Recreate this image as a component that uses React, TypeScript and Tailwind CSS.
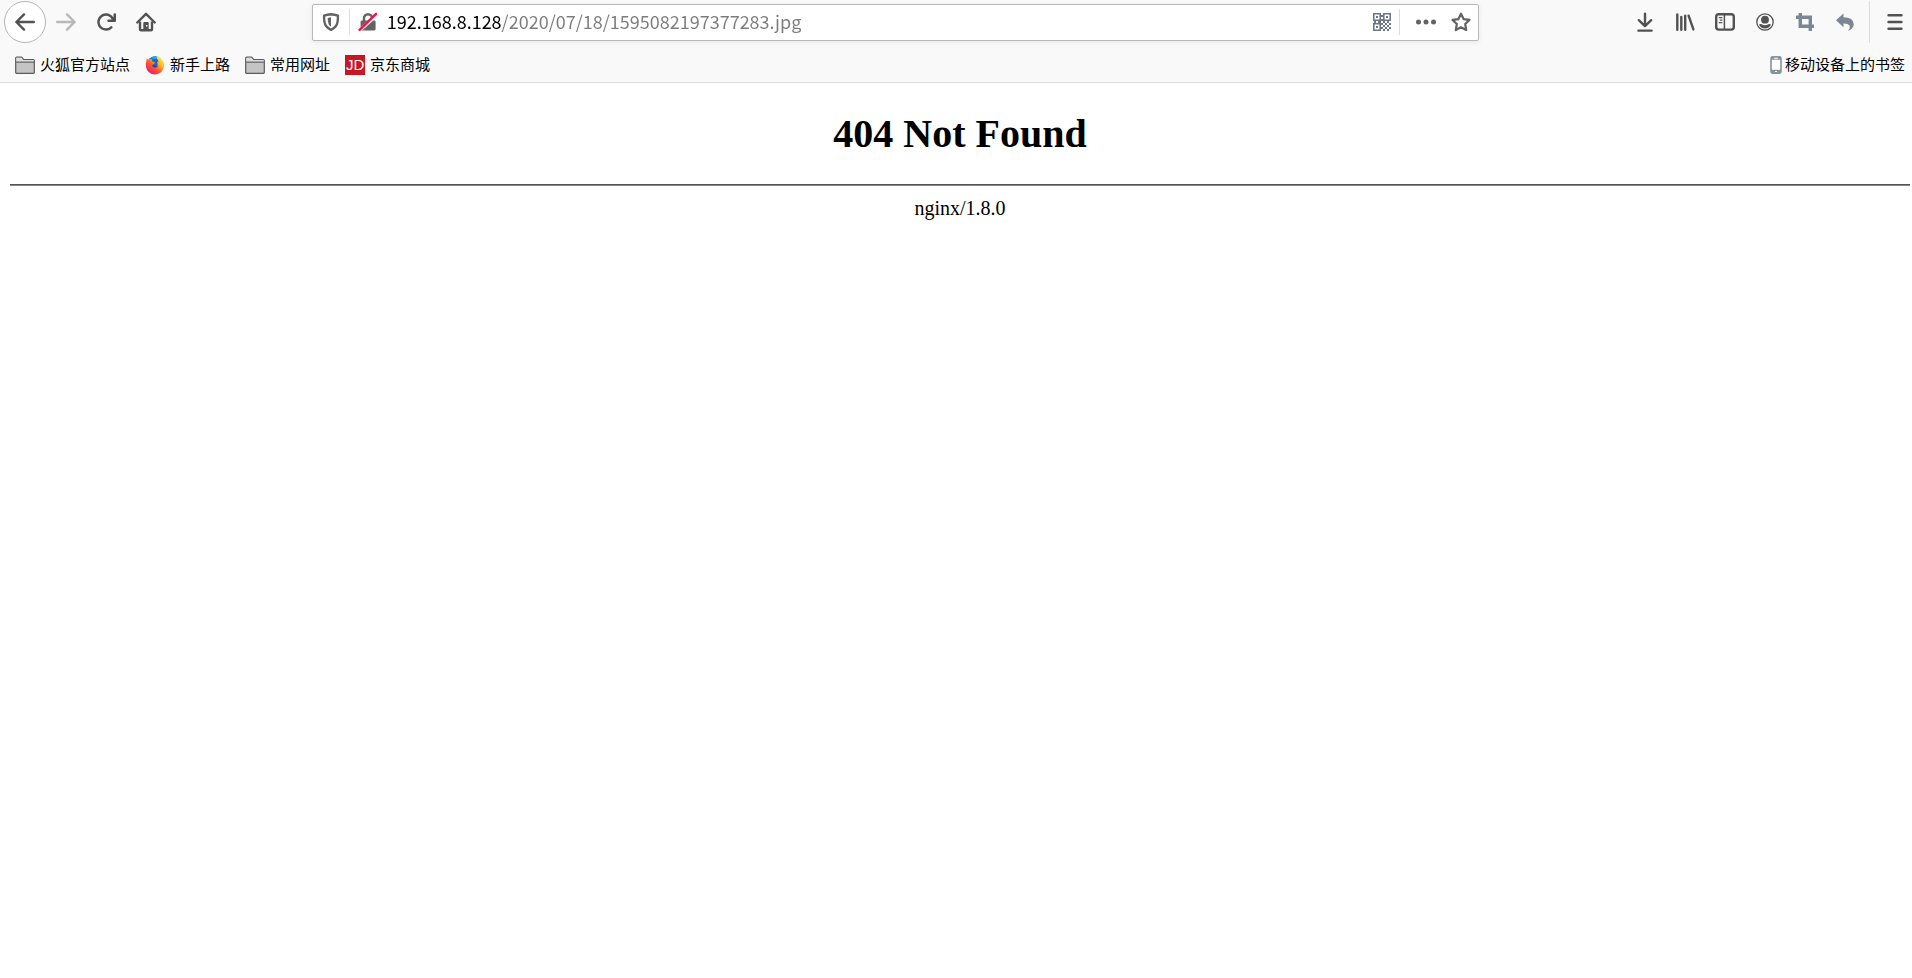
import { FC, ReactNode, useState } from "react";

type IconButtonProps = {
    label: string;
    className?: string;
    disabled?: boolean;
    children: ReactNode;
}

const IconButton: FC<IconButtonProps> = ({ label, className = "h-10 w-10", disabled, children }) => {
    return (
        <button
            type="button"
            aria-label={label}
            disabled={disabled}
            className={`flex shrink-0 items-center justify-center text-[#525252] ${className}`}
        >
            {children}
        </button>
    );
};

type IconProps = {
    children: ReactNode;
    viewBox?: string;
    className?: string;
}

const Icon: FC<IconProps> = ({ children, viewBox = "0 0 20 20", className = "size-5" }) => (
    <svg viewBox={viewBox} className={className} fill="currentColor" aria-hidden="true">
        {children}
    </svg>
);

const Arrow = () => (
    <g fill="none" stroke="currentColor" strokeWidth="2.4" strokeLinecap="round" strokeLinejoin="round">
        <path d="M1.4 10H18.8M9 2.4L1.4 10L9 17.6" />
    </g>
);

const FolderIcon = () => (
    <Icon className="h-5 w-5 text-[#5a5a5a]">
        <path d="M.7 17.6V3.2q0-1 1-1h4.6q.7 0 1.1.6l1.2 1.7h9.7q1 0 1 1v12.1q0 .8-.8.8H1.5q-.8 0-.8-.8z" fill="#c4c4c4" stroke="currentColor" strokeWidth="1.2" />
        <path d="M1.3 7.2h17.4" stroke="currentColor" strokeWidth="1" />
        <path d="M1.3 6.1V2.8h5.2l1.6 2.3h10.6v1z" fill="#dcdcdc" />
    </Icon>
);

const FirefoxIcon = () => (
    <Icon>
        <defs>
            <linearGradient id="flame" x1="0.9" y1="0.1" x2="0.2" y2="0.95">
                <stop offset="0" stopColor="#fff04a" />
                <stop offset="0.35" stopColor="#ffb41e" />
                <stop offset="0.6" stopColor="#ff5a2c" />
                <stop offset="1" stopColor="#f5126a" />
            </linearGradient>
        </defs>
        <circle cx="9.8" cy="8.2" r="7" fill="#1467d2" />
        <path d="M5.6 3.2q3.8-3 7.4-1.4q-2 .6-2.200 2.400z" fill="#1ea7ee" />
        <path d="M1.9 3.2Q2.6 4.6 3.9 4.4Q5.6 3.8 7.4 4.5Q6.600 5.600 7.200 6.600Q8.800 6.700 10 7.500Q9.500 8.900 8 9.600Q7.100 10.300 7.300 11.400Q8.200 12.800 9.800 12.300Q11.400 11.600 12.300 11.700Q13.300 9.600 12 6.700Q12.900 6.900 13.500 7.800Q13.500 4.900 11.600 3.200Q11.400 1.600 12.400 .5Q14 2.600 16.400 4.200Q19.400 7 19.100 11Q18.200 18.600 10.400 19.400Q2.200 19.200 .9 11.400Q.5 8.700 1.300 6.500Q1.200 4.600 1.900 3.200z" fill="url(#flame)" />
        <path d="M7.400 10.300q2-.9 3.200.2q1 .8 2.200.2q-.9 2-2.900 1.900q-2.100-.3-2.500-2.300z" fill="#1d4fae" />
    </Icon>
);

const JdIcon = () => (
    <span className="flex size-5 items-center justify-center bg-[#c81623] font-['Liberation_Sans',sans-serif] text-[15px] text-white">JD</span>
);

const QrIcon = () => (
    <Icon viewBox="0 0 18 18" className="size-[18px] text-[#6d7986]">
        <path d="M.8.8h6.400v6.400H.8zM10.800.8h6.400v6.400H10.800zM.8 10.800h6.400v6.400H.8z" fill="none" stroke="currentColor" strokeWidth="1.600" />
        <path d="M3 3h2v2H3zM13 3h2v2h-2zM3 13h2v2H3z" />
        <path d="M8 2h2v2H8zM8 6h2v2H8zM1 8h2v2H1zM5 8h3v2H5zM10 8h2v2h-2zM14 8h2v2h-2zM8 10h2v2H8zM12 10h2v2h-2zM16 10h2v2h-2zM10 12h2v2h-2zM14 12h2v2h-2zM8 14h2v2H8zM12 14h2v2h-2zM16 14h2v2h-2zM10 16h2v2h-2zM14 16h2v2h-2z" />
    </Icon>
);

const bookmarks = [
    { title: "火狐官方站点", icon: <FolderIcon /> },
    { title: "新手上路", icon: <FirefoxIcon /> },
    { title: "常用网址", icon: <FolderIcon /> },
    { title: "京东商城", icon: <JdIcon /> },
];

const AddressBar = () => {
    const [url, setUrl] = useState("192.168.8.128/2020/07/18/1595082197377283.jpg");

    return (
        <div className="flex h-[37px] min-w-0 flex-8 items-center rounded-xs border border-[#b9b9b9] bg-white shadow-[0_1px_5px_rgba(0,0,0,0.08)]">
            <IconButton label="Tracking protection" className="h-8 w-9">
                <Icon className="size-5 text-[#636363]">
                    <path d="M10 2.2q3.6.2 6.9 1.4q.3 7.2-2 10.4q-2 2.8-4.9 3.9q-2.900-1.100-4.900-3.900q-2.300-3.200-2-10.400q3.300-1.200 6.900-1.400z" fill="none" stroke="currentColor" strokeWidth="2.4" strokeLinejoin="round" />
                    <path d="M10 5.300v9.300q-3.300-1.600-3.300-8.700z" />
                </Icon>
            </IconButton>
            <span className="h-[26px] w-px bg-[#dcdcdc]" />
            <IconButton label="Connection is not secure" className="h-8 w-9">
                <Icon className="size-5 text-[#636363]">
                    <path d="M6 9V6.200a4 4 0 0 1 8 0V9" fill="none" stroke="currentColor" strokeWidth="2.4" />
                    <rect x="2.600" y="8.600" width="15" height="9.800" rx="1.400" />
                    <path d="M.8 19L19.200 2.600" stroke="#fff" strokeWidth="3.600" />
                    <path d="M1.600 17.800L18 1.800" stroke="#ff0a43" strokeWidth="2.400" strokeLinecap="round" />
                </Icon>
            </IconButton>
            <input
                type="text"
                aria-label="Address"
                value={url}
                onChange={(e) => setUrl(e.target.value)}
                className="mb-0.5 h-8 min-w-0 flex-1 bg-linear-to-r from-black from-[116px] to-[#7c7c7c] to-[116px] bg-clip-text pl-px font-['Noto_Sans_CJK_SC',sans-serif] text-lg text-transparent outline-none"
            />
            <IconButton label="QR code" className="h-8 w-[34px]">
                <QrIcon />
            </IconButton>
            <span className="h-[26px] w-px bg-[#dcdcdc]" />
            <IconButton label="Page actions" className="ml-2 h-8 w-9">
                <Icon className="size-5 text-[#636363]">
                    <circle cx="2.500" cy="10" r="2.500" />
                    <circle cx="10" cy="10" r="2.500" />
                    <circle cx="17.500" cy="10" r="2.500" />
                </Icon>
            </IconButton>
            <IconButton label="Bookmark this page" className="h-8 w-[34px]">
                <Icon className="size-5 text-[#636363]">
                    <path d="M10 1.700L12.600 7.100L18.500 7.900L14.200 12L15.200 18L10 15.200L4.800 18L5.800 12L1.500 7.900L7.400 7.100z" fill="none" stroke="currentColor" strokeWidth="2.200" strokeLinejoin="round" />
                </Icon>
            </IconButton>
        </div>
    );
};

const NavBar = () => {
    return (
        <nav className="flex h-11 items-center">
            <IconButton label="Back" className="ml-1 size-[42px] rounded-full border border-[#b5b5b5] bg-white">
                <Icon><Arrow /></Icon>
            </IconButton>
            <IconButton label="Forward" disabled>
                <Icon className="size-5 rotate-180 text-[#b8b8b8]"><Arrow /></Icon>
            </IconButton>
            <IconButton label="Reload">
                <Icon viewBox="0 0 16 16">
                    <path d="M15 1a1 1 0 0 0-1 1v2.418A6.995 6.995 0 1 0 8 15a6.954 6.954 0 0 0 4.950-2.050 1 1 0 0 0-1.414-1.414A5.019 5.019 0 1 1 12.549 6H10a1 1 0 0 0 0 2h5a1 1 0 0 0 1-1V2a1 1 0 0 0-1-1z" />
                </Icon>
            </IconButton>
            <IconButton label="Home">
                <Icon>
                    <path d="M1.300 10.500L10 1.800L18.700 10.500" fill="none" stroke="currentColor" strokeWidth="2.400" strokeLinecap="round" strokeLinejoin="round" />
                    <path d="M4 9.500V17.200q0 1 1 1H15q1 0 1-1V9.500" fill="none" stroke="currentColor" strokeWidth="2.400" />
                    <path d="M7.300 18v-7q0-1 1-1h3.400q1 0 1 1v7z" />
                    <rect x="10" y="13" width="1.400" height="1.600" fill="#f9f9fa" />
                </Icon>
            </IconButton>
            <span className="flex-1" />
            <AddressBar />
            <span className="flex-1" />
            <IconButton label="Downloads">
                <Icon>
                    <path d="M10 1.600V14M3.800 8.200L10 14.200L16.200 8.200M3.400 18.600H16.600" fill="none" stroke="currentColor" strokeWidth="2.400" strokeLinecap="round" strokeLinejoin="round" />
                </Icon>
            </IconButton>
            <IconButton label="Library">
                <Icon>
                    <path d="M2.300 2.500V17.700M6.300 5V17.700M10.200 3.700V17.700M13.600 3.700L18.400 17.400" fill="none" stroke="currentColor" strokeWidth="2.400" strokeLinecap="round" />
                </Icon>
            </IconButton>
            <IconButton label="Sidebars">
                <Icon>
                    <rect x="1.200" y="2.200" width="17.600" height="15.400" rx="2.600" fill="none" stroke="currentColor" strokeWidth="2.400" />
                    <path d="M9.400 2V18" stroke="currentColor" strokeWidth="1.500" />
                    <path d="M3.800 5.600H7.400M4.800 8.100H7.400M3.800 10.600H7.400" stroke="currentColor" strokeWidth="1.200" />
                </Icon>
            </IconButton>
            <IconButton label="Account">
                <Icon>
                    <circle cx="10" cy="10" r="8.200" fill="none" stroke="currentColor" strokeWidth="1.300" />
                    <circle cx="10" cy="7.700" r="3.900" />
                    <path d="M4 12.400q1.400-.8 2.600-.2q3.400 2.200 6.800 0q1.200-.6 2.600.2q-1.800 4-6 4t-6-4z" />
                </Icon>
            </IconButton>
            <IconButton label="Screenshot">
                <Icon className="size-5 text-[#7b8794]">
                    <path d="M1 5.300H15.300V19M5.300 1V14.300H19" fill="none" stroke="currentColor" strokeWidth="3.400" />
                </Icon>
            </IconButton>
            <IconButton label="Undo close tab">
                <Icon className="size-5 text-[#7b8794]">
                    <path d="M1 8.300L8.500 1.400V5.200Q18.600 5.400 18.800 12.300Q18.600 17 12.800 19Q15.600 16 14.500 13.600Q13 11.300 8.500 11.400V15.200z" />
                </Icon>
            </IconButton>
            <span className="ml-1 h-[42px] w-px bg-[#dcdcdc]" />
            <IconButton label="Menu" className="ml-2 h-10 w-[34px]">
                <Icon>
                    <path d="M3.500 3.300H16.500M3.500 10H16.500M3.500 16.700H16.500" stroke="currentColor" strokeWidth="2.400" strokeLinecap="round" />
                </Icon>
            </IconButton>
        </nav>
    );
};

const BookmarksBar = () => {
    return (
        <div className="flex h-[38px] items-center gap-[15px] pt-1 pr-[7px] pl-[15px] font-['Noto_Sans_CJK_SC',sans-serif] text-[15px] leading-5 text-black">
            {bookmarks.map((bookmark) => (
                <a key={bookmark.title} href="#" className="flex items-center gap-[5px] whitespace-nowrap">
                    {bookmark.icon}
                    <span className="pb-0.5">{bookmark.title}</span>
                </a>
            ))}
            <a href="#" className="ml-auto flex items-center gap-[3px] whitespace-nowrap">
                <Icon viewBox="0 0 12 20" className="h-5 w-3 text-[#89939a]">
                    <rect x="1" y="1.800" width="10" height="16.400" rx="1.600" fill="#fff" stroke="currentColor" strokeWidth="1.600" />
                    <path d="M1 2h10v2.800H1zM1 14.800h10v3.400H1z" />
                    <path d="M4 3.200H8M5 16.500H7" stroke="#fff" strokeWidth="1" />
                </Icon>
                <span className="pb-0.5">移动设备上的书签</span>
            </a>
        </div>
    );
};

const App = () => {
    return (
        <div className="min-h-screen bg-white">
            <header className="border-b border-[#dedede] bg-[#f9f9fa]">
                <NavBar />
                <BookmarksBar />
            </header>
            <main className="pr-0.5 pl-2.5 text-center font-['Liberation_Serif',serif] text-black">
                <h1 className="pt-7 pb-[27px] text-[40px] leading-[46px] font-bold">404 Not Found</h1>
                <hr className="mb-2.5 border-t border-b border-t-[#555] border-b-[#858585]" />
                <p className="text-xl leading-6">nginx/1.8.0</p>
            </main>
        </div>
    );
};

export default App;
